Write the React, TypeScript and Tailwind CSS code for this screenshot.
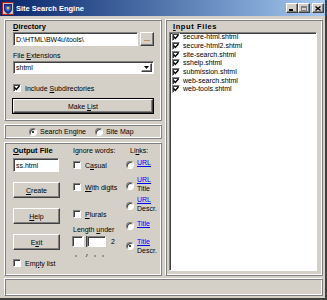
import type { ReactNode } from 'react'

const raised =
  'border border-t-white border-l-white border-r-[#404040] border-b-[#404040] shadow-[inset_-1px_-1px_0_#808080]'
const sunken =
  'border border-t-[#808080] border-l-[#808080] border-r-white border-b-white shadow-[inset_1px_1px_0_#404040]'
const panel =
  'border border-t-white border-l-white border-r-[#808080] border-b-[#808080] shadow-[inset_1px_1px_0_#808080,inset_-1px_-1px_0_#fff]'

const FILES = [
  'secure-html.shtml',
  'secure-html2.shtml',
  'site-search.shtml',
  'sshelp.shtml',
  'submission.shtml',
  'web-search.shtml',
  'web-tools.shtml',
]

export default function App() {
  return (
    <div className="w-[327px] h-[300px] overflow-hidden bg-[#d4d0c8] font-['Liberation_Sans',Arial,sans-serif] text-[7px] leading-[9px] text-black border-r-2 border-b-2 border-r-[#404040] border-b-[#404040] flex flex-col">
      <TitleBar />

      <div className="flex gap-[3px] pl-[4px] pt-[3px] h-[260px]">
        {/* left column */}
        <div className="w-[158px] flex flex-col gap-[3px]">
          <div className={`${panel} h-[102px] px-[7px] pt-[2px]`}>
            <div className="font-bold text-[7.5px] ml-px h-[9px]">
              <u>D</u>irectory
            </div>
            <div className="flex gap-[2px] mt-px h-[14px] ml-px">
              <div className={`${sunken} bg-white flex-1 flex items-center px-[2px]`}>D:\HTML\BW4u\tools\</div>
              <div className={`${raised} w-[14px] flex items-center justify-center pb-[2px]`}>...</div>
            </div>
            <div className="mt-[5px] h-[9px] ml-px">
              File <u>E</u>xtensions
            </div>
            <div className={`${sunken} bg-white mt-px h-[13px] ml-px flex items-center pl-[2px]`}>
              <span className="flex-1">shtml</span>
              <div className={`${raised} w-[11px] h-[9px] mr-px flex items-center justify-center`}>
                <svg width="5" height="3" viewBox="0 0 5 3">
                  <path d="M0 0h5L2.5 3z" fill="#000" />
                </svg>
              </div>
            </div>
            <div className="mt-[10px] h-[8px] ml-px flex items-center gap-[4px]">
              <Check on />
              <span>
                Include <u>S</u>ubdirectories
              </span>
            </div>
            <div className="mt-[6px] h-[16px] border border-black">
              <Button className="h-full">
                <span>
                  Make <u>L</u>ist
                </span>
              </Button>
            </div>
          </div>

          <div className={`${panel} h-[15px] flex items-center pl-[24px]`}>
            <Radio on />
            <span className="ml-[3px]">Search Engine</span>
            <span className="ml-[9px]" />
            <Radio />
            <span className="ml-[3px]">Site Map</span>
          </div>

          <div className={`${panel} flex-1 flex pt-[3px] pl-[8px]`}>
            {/* output column */}
            <div className="w-[47px] flex flex-col">
              <div className="font-bold text-[7.5px] h-[9px]">
                <u>O</u>utput File
              </div>
              <div className={`${sunken} bg-white mt-[3px] h-[14px] w-[46px] flex items-center px-[2px]`}>ss.html</div>
              <Button className="mt-[10px] h-[16px]">
                <span>
                  <u>C</u>reate
                </span>
              </Button>
              <Button className="mt-[10px] h-[16px]">
                <span>
                  <u>H</u>elp
                </span>
              </Button>
              <Button className="mt-[10px] h-[16px]">
                <span>
                  E<u>x</u>it
                </span>
              </Button>
              <div className="mt-[9px] h-[8px] flex items-center gap-[4px] whitespace-nowrap">
                <Check />
                <span>
                  Em<u>p</u>ty list
                </span>
              </div>
            </div>

            {/* ignore words column */}
            <div className="w-[53px] ml-[13px] flex flex-col">
              <div className="h-[9px]">Ignore words:</div>
              <CheckRow className="mt-[6px]">
                C<u>a</u>sual
              </CheckRow>
              <CheckRow className="mt-[14px]">
                <u>W</u>ith digits
              </CheckRow>
              <CheckRow className="mt-[19px]">
                <u>P</u>lurals
              </CheckRow>
              <div className="mt-[7px] h-[9px] whitespace-nowrap">
                Length <u>u</u>nder
              </div>
              <div className="mt-[2px] h-[11px] flex items-center -ml-px">
                <div className={`${sunken} bg-white w-[11px] h-[11px]`} />
                <div className="w-[4px] h-[11px] bg-[#d4d0c8] border-r border-r-[#404040] border-l border-l-white" />
                <div className={`${sunken} bg-white w-[19px] h-[11px]`} />
                <span className="ml-[5px]">2</span>
              </div>
              <div className="mt-[7px] h-[4px] w-[33px]">
                <svg width="33" height="4" viewBox="0 0 33 4">
                  <path d="M3 1v2M13 3l1.5-3M22 1v2M30 1v2" stroke="#404040" strokeWidth="0.8" fill="none" />
                </svg>
              </div>
            </div>

            {/* links column */}
            <div className="flex flex-col">
              <div className="h-[9px] pl-[4px]">
                Li<u>n</u>ks:
              </div>
              <LinkRow className="mt-[4px]" radioTop={2} link="URL" />
              <LinkRow className="mt-[7px]" radioTop={6} link="URL" sub="Title" />
              <LinkRow className="mt-[3px]" radioTop={6} link="URL" sub="Descr." />
              <LinkRow className="mt-[7px]" radioTop={2} link="Title" />
              <LinkRow className="mt-[8px]" radioTop={4} link="Title" sub="Descr." on />
            </div>
          </div>
        </div>

        {/* right column */}
        <div className={`${panel} w-[158px] flex flex-col px-[3px] pt-[2px] pb-[4px]`}>
          <div className="font-bold text-[7.5px] h-[9px] ml-[4px] tracking-[0.6px]">
            <u>I</u>nput Files
          </div>
          <div className={`${sunken} bg-white mt-px flex-1 mr-[2px] pl-[2px]`}>
            {FILES.map(f => (
              <div key={f} className="h-[8.67px] flex items-center gap-[3px] leading-[8px]">
                <Check on />
                <span>{f}</span>
              </div>
            ))}
          </div>
        </div>
      </div>

      {/* status bar */}
      <div className={`${panel} ml-[4px] mr-[2px] mt-[2px] h-[18px]`} />
    </div>
  )
}

function TitleBar() {
  return (
    <div className="h-[16px] bg-linear-to-r from-[#0a246a] to-[#a6caf0] flex items-center pl-[2px] pr-[1px] shrink-0">
      <svg width="12" height="13" viewBox="0 0 12 13">
        <rect x="0.5" y="0.5" width="11" height="12" fill="#c8c4bc" stroke="#b02020" />
        <path d="M2 2h8v5c0 2.5-2 4-4 5c-2-1-4-2.5-4-5z" fill="#1b2f8a" />
        <path d="M3.5 4h5v2.5c0 1.5-1.2 2.5-2.5 3c-1.3-.5-2.5-1.5-2.5-3z" fill="#3c6ac8" />
        <circle cx="6" cy="6" r="1.2" fill="#e8d040" />
      </svg>
      <span className="ml-[2px] text-white font-bold text-[7.5px]">Site Search Engine</span>
      <div className="flex-1" />
      <TitleBtn>
        <div className="w-[4px] h-[2px] bg-black mt-[4px] mr-[2px]" />
      </TitleBtn>
      <TitleBtn>
        <div className="w-[6px] h-[5px] border border-[#808080] border-t-2" />
      </TitleBtn>
      <div className="w-[2px]" />
      <TitleBtn>
        <svg width="6" height="5" viewBox="0 0 6 5">
          <path d="M0.5 0.5l5 4M5.5 0.5l-5 4" stroke="#000" strokeWidth="1.3" />
        </svg>
      </TitleBtn>
    </div>
  )
}

function TitleBtn({ children }: { children: ReactNode }) {
  return (
    <div className={`${raised} bg-[#d4d0c8] w-[12px] h-[10px] flex items-center justify-center`}>{children}</div>
  )
}

function Button({ children, className = '' }: { children: ReactNode; className?: string }) {
  return <div className={`${raised} ${className} flex items-center justify-center bg-[#d4d0c8]`}>{children}</div>
}

function Check({ on = false }: { on?: boolean }) {
  return (
    <div className={`${sunken} bg-white w-[8px] h-[8px] shrink-0 flex items-center justify-center`}>
      {on && (
        <svg width="6" height="6" viewBox="0 0 6 6">
          <path d="M0.6 2.6L2.3 4.4L5.4 1" stroke="#000" strokeWidth="1.4" fill="none" />
        </svg>
      )}
    </div>
  )
}

function CheckRow({ children, className = '' }: { children: ReactNode; className?: string }) {
  return (
    <div className={`${className} h-[8px] flex items-center gap-[4px] whitespace-nowrap`}>
      <Check />
      <span>{children}</span>
    </div>
  )
}

function Radio({ on = false }: { on?: boolean }) {
  return (
    <div className="w-[8px] h-[8px] shrink-0 rounded-full bg-white border border-t-[#808080] border-l-[#808080] border-r-white border-b-white shadow-[inset_1px_1px_0_#404040] flex items-center justify-center">
      {on && <div className="w-[2px] h-[2px] rounded-full bg-black" />}
    </div>
  )
}

function LinkRow({
  link,
  sub,
  on = false,
  radioTop,
  className = '',
}: {
  link: string
  sub?: string
  on?: boolean
  radioTop: number
  className?: string
}) {
  return (
    <div className={`${className} flex items-start`}>
      <div style={{ marginTop: radioTop }}>
        <Radio on={on} />
      </div>
      <div className="ml-[3px] flex flex-col leading-[8px]">
        <span className="text-[#0000ff] underline h-[8px]">{link}</span>
        {sub && <span className="h-[8px] mt-px">{sub}</span>}
      </div>
    </div>
  )
}
